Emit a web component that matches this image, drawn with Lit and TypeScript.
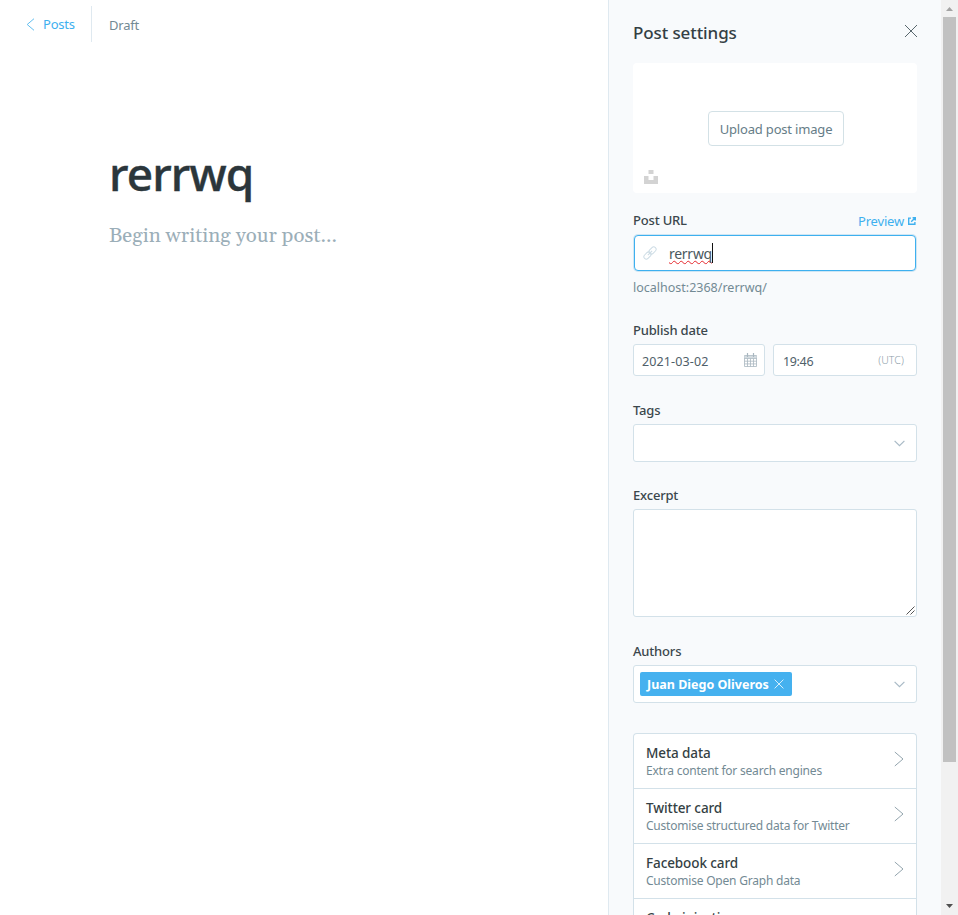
import { LitElement, html, css } from "lit";
import { customElement, property } from "lit/decorators.js";

const chevronDown = html`<svg class="down" width="11" height="7" viewBox="0 0 11 7"><path d="M.6.8 5.5 5.7 10.4.8" fill="none" stroke="#a9bac6" stroke-width="1.2"/></svg>`;

@customElement("settings-row")
export class SettingsRow extends LitElement {
  @property() heading = "";
  @property() detail = "";

  static styles = css`
    :host { display: flex; justify-content: space-between; align-items: flex-start; box-sizing: border-box; height: 55px; padding: 9px 12px 0; border-bottom: 1px solid #d3e1e9; white-space: nowrap; }
    .heading { font-size: 13.5px; font-weight: 500; line-height: 20px; color: #343f44; letter-spacing: -.1px; }
    .detail { font-size: 12px; line-height: 16px; color: #738a94; letter-spacing: -.21px; }
    svg { display: block; margin-top: 8px; }
  `;

  render() {
    return html`
      <div>
        <div class="heading">${this.heading}</div>
        <div class="detail">${this.detail}</div>
      </div>
      <svg width="10" height="16" viewBox="0 0 10 16"><path d="M.8 1 9 8 .8 15" fill="none" stroke="#93a4ad" stroke-width="1"/></svg>
    `;
  }
}

@customElement("app-root")
export class AppRoot extends LitElement {
  static styles = css`
    :host { display: flex; width: 958px; height: 915px; overflow: hidden; background: #fff; font-family: "Noto Sans", "Open Sans", sans-serif; font-size: 13px; white-space: nowrap; }
    * { box-sizing: border-box; }
    svg { display: block; flex: none; }
    .editor { flex: 1; min-width: 0; }
    .topbar { display: flex; align-items: center; height: 42px; padding: 6px 0 0 26px; }
    .back { display: flex; align-items: center; gap: 8px; width: 65px; color: #3eb0ef; letter-spacing: -.2px; }
    .status { display: flex; align-items: center; height: 36px; border-left: 1px solid #dfe9f0; padding: 1px 0 0 17px; color: #738a94; letter-spacing: -.2px; }
    .post { padding: 98px 0 0 109px; }
    .title { font-size: 46px; font-weight: 500; line-height: 66px; letter-spacing: -.85px; color: #2b363b; -webkit-text-stroke: .45px #2b363b; }
    .body { margin-top: 15px; font-family: Gelasio, Georgia, "Liberation Serif", serif; font-size: 20.4px; line-height: 30px; letter-spacing: .03px; color: #9baeb8; }

    .panel { width: 333px; padding: 0 24px; border-left: 1px solid #dfe9f0; background: #f8fafc; overflow: hidden; }
    .head { display: flex; justify-content: space-between; align-items: center; height: 63px; }
    .head h2 { margin: 2px 0 0; font-size: 17px; font-weight: 500; line-height: 24px; letter-spacing: -.1px; color: #343f44; }
    .head svg { margin: -2px -1px 0 0; }
    .upload { display: grid; place-items: center; position: relative; height: 130px; border-radius: 4px; background: #fff; }
    .button { display: flex; align-items: center; justify-content: center; width: 136px; height: 35px; margin-left: 2px; border: 1px solid #d3e1e6; border-radius: 4px; padding-top: 1px; color: #667d87; letter-spacing: -.18px; }
    .unsplash { position: absolute; left: 11px; bottom: 9px; }
    .label { display: flex; justify-content: space-between; height: 24px; padding-top: 1px; line-height: 19px; font-weight: 500; color: #3b474c; letter-spacing: -.18px; }
    .url-field .label { padding-top: 0; }
    .preview { display: flex; gap: 4px; margin-top: 1px; font-weight: 400; color: #3eb0ef; }
    .preview svg { margin: 5px 1px 0 0; }
    .field { margin-top: 24px; }
    .url-field { margin-top: 18px; }
    .url { display: flex; align-items: center; height: 36px; margin: 0 1px; padding-left: 8px; border: 1px solid #3eb0ef; border-radius: 4px; background: #fff; box-shadow: 0 0 0 1px #cfe6f4; }
    .url span { margin: 1px 0 0 12px; font-size: 14px; line-height: 20px; color: #4a5960; letter-spacing: -.27px; text-decoration: underline wavy #e5282d 1px; text-decoration-skip-ink: none; text-underline-offset: 1px; }
    .caret { width: 1px; height: 20px; background: #111; }
    .help { height: 20px; margin: 6px 0 23px; padding-top: 1px; font-size: 12.5px; line-height: 20px; color: #738a94; }
    .dates { display: grid; grid-template-columns: 132px 144px; gap: 8px; }
    .box { display: flex; align-items: center; justify-content: space-between; border: 1px solid #d3e1e9; border-radius: 3px; background: #fff; }
    .date { height: 32px; padding: 2px 8px 0; font-size: 12.5px; color: #4f6069; }
    .date svg { margin: -3px -1px 0 0; }
    .day { letter-spacing: .12px; }
    .time { letter-spacing: -.35px; padding-left: 1px; }
    .zone { margin: -3px 4px 0 0; font-size: 10.5px; font-weight: 300; color: #8fa0aa; letter-spacing: .1px; }
    .select { height: 38px; padding: 0 11px 0 6px; }
    .down { margin-left: auto; }
    .area { width: 284px; height: 108px; align-items: flex-end; justify-content: flex-end; }
    .excerpt { margin-top: 23px; }
    .chip { display: flex; align-items: center; gap: 5px; height: 24px; width: 152px; padding-left: 7px; border-radius: 2px; background: #45b1ef; color: #fff; font-size: 12.5px; font-weight: 700; }
    .list { height: 400px; margin-top: 30px; border: 1px solid #d3e1e9; border-bottom: 0; border-radius: 4px; background: #fff; }

    .scroll { display: flex; flex-direction: column; justify-content: space-between; width: 17px; padding: 0 2px; background: #f1f1f1; }
    .scroll svg { width: 13px; height: 17px; }
    .thumb { height: 745px; margin-bottom: auto; background: #c1c1c1; }
  `;

  render() {
    return html`
      <main class="editor">
        <div class="topbar">
          <div class="back">
            <svg width="9" height="13" viewBox="0 0 9 13"><path d="M8 .7 1.2 6.5 8 12.3" fill="none" stroke="#62beef"/></svg>
            <span>Posts</span>
          </div>
          <div class="status">Draft</div>
        </div>
        <div class="post">
          <div class="title">rerrwq</div>
          <div class="body">Begin writing your post...</div>
        </div>
      </main>

      <aside class="panel">
        <div class="head">
          <h2>Post settings</h2>
          <svg width="14" height="14" viewBox="0 0 14 14"><path d="m1 1 12 12M13 1 1 13" fill="none" stroke="#59676d"/></svg>
        </div>
        <div class="upload">
          <div class="button">Upload post image</div>
          <svg class="unsplash" width="14" height="14" viewBox="0 0 14 14"><path d="M4.5 0h5v4h-5zM0 6h4.5v4h5V6H14v8H0z" fill="#d3d3d3"/></svg>
        </div>

        <div class="url-field">
          <div class="label">
            <span>Post URL</span>
            <span class="preview">Preview
              <svg width="8" height="8" viewBox="0 0 8 8" fill="none" stroke="#3eb0ef" stroke-width="1.4"><path d="M3 1.1H.7v6.2h6.2V5M3.2 4.8 7 1M4.6.7h2.7v2.7"/></svg>
            </span>
          </div>
          <div class="url">
            <svg width="14" height="14" viewBox="0 0 14 14"><g transform="rotate(-45 7 7)" fill="none" stroke="#cddce5"><rect x="-.6" y="4.6" width="8" height="4.8" rx="2.4"/><rect x="6.6" y="4.6" width="8" height="4.8" rx="2.4"/><path d="M4 7h6"/></g></svg>
            <span>rerrwq</span><i class="caret"></i>
          </div>
          <div class="help">localhost:2368/rerrwq/</div>
        </div>

        <div class="label">Publish date</div>
        <div class="dates">
          <div class="box date">
            <span class="day">2021-03-02</span>
            <svg width="13" height="14" viewBox="0 0 13 14" fill="none" stroke="#a9b7c0" stroke-width=".8"><path d="M.5 2.5h12v11H.5zM.5 5.5h12M.5 8.2h12M.5 10.9h12M3.5 5.5v8M6.5 5.5v8M9.5 5.5v8"/><path d="M.5 4h12" stroke="#d4dce1" stroke-width="2"/><path d="M3.5 0v4M9.5 0v4" stroke-width="1.2"/></svg>
          </div>
          <div class="box date"><span class="time">19:46</span><span class="zone">(UTC)</span></div>
        </div>

        <div class="field">
          <div class="label">Tags</div>
          <div class="box select">${chevronDown}</div>
        </div>

        <div class="field excerpt">
          <div class="label">Excerpt</div>
          <div class="box area"><svg width="10" height="10" viewBox="0 0 10 10"><path d="M.5 8.5l8-8M4.5 8.5l4-4" fill="none" stroke="#555"/></svg></div>
        </div>

        <div class="field">
          <div class="label">Authors</div>
          <div class="box select">
            <div class="chip">
              <span>Juan Diego Oliveros</span>
              <svg width="10" height="10" viewBox="0 0 10 10"><path d="m.6.6 8.8 8.8M9.4.6.6 9.4" fill="none" stroke="#d5effc"/></svg>
            </div>
            ${chevronDown}
          </div>
        </div>

        <div class="list">
          <settings-row heading="Meta data" detail="Extra content for search engines"></settings-row>
          <settings-row heading="Twitter card" detail="Customise structured data for Twitter"></settings-row>
          <settings-row heading="Facebook card" detail="Customise Open Graph data"></settings-row>
          <settings-row heading="Code injection"></settings-row>
        </div>
      </aside>

      <div class="scroll">
        <svg viewBox="0 0 13 17"><path d="M3 11h7L6.5 7z" fill="#a3a3a3"/></svg>
        <div class="thumb"></div>
        <svg viewBox="0 0 13 17"><path d="M3 6h7l-3.5 4z" fill="#505050"/></svg>
      </div>
    `;
  }
}
